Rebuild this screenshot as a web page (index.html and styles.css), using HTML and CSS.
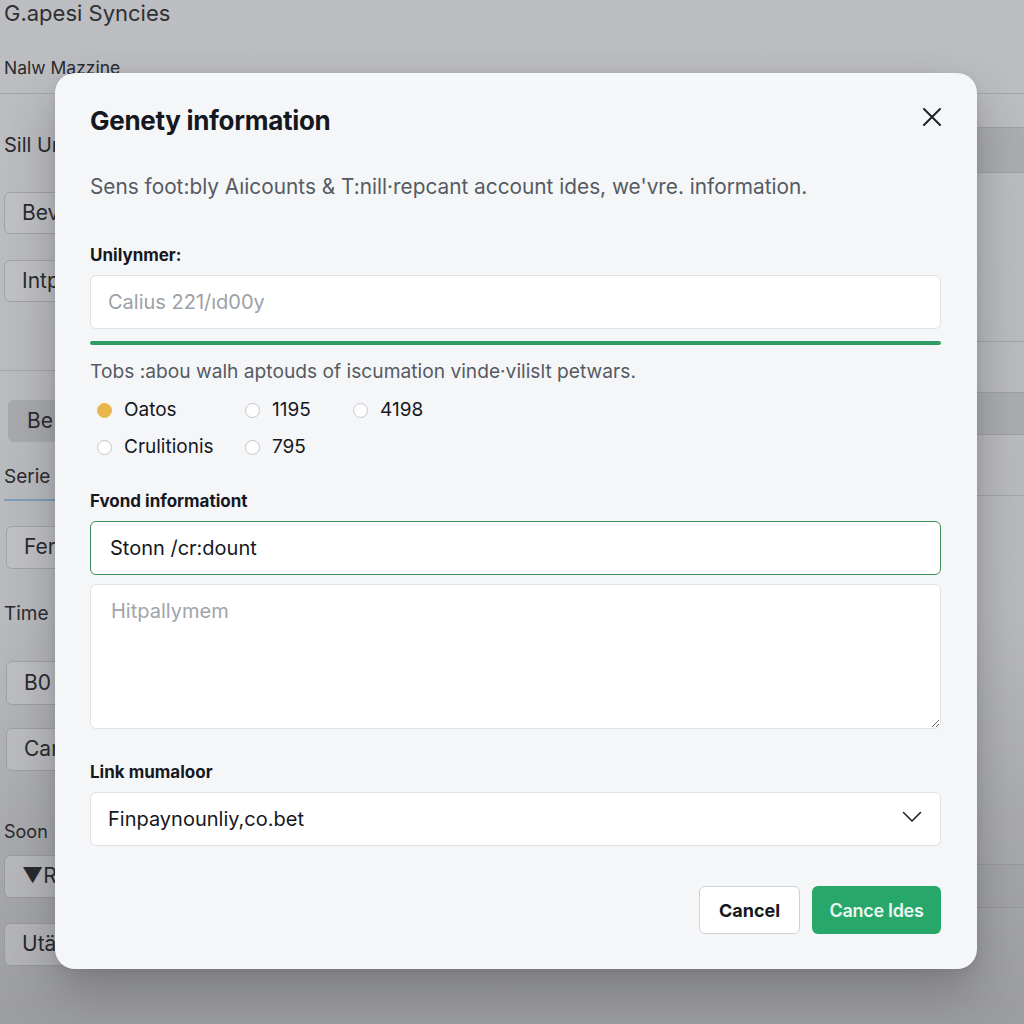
FILE: index.html
```html
<!DOCTYPE html>
<html lang="en">
<head>
<meta charset="utf-8">
<title>Genety information</title>
<link rel="stylesheet" href="styles.css">
</head>
<body>
<div class="page">
  <div class="page-left">
    <h1 class="bg-title">G.apesi Syncies</h1>
    <div class="bg-sub">Nalw Mazzine</div>
    <div class="bg-rule r1"></div>
    <div class="bg-text t1">Sill Ur</div>
    <div class="bg-btn b1">Bev</div>
    <div class="bg-btn b2">Intp</div>
    <div class="bg-rule r2"></div>
    <div class="bg-btn bg-btn-filled b3">Be</div>
    <div class="bg-text t2">Serie</div>
    <div class="bg-blue"></div>
    <div class="bg-btn b4">Fer</div>
    <div class="bg-text t3">Time</div>
    <div class="bg-btn b5">B0</div>
    <div class="bg-btn b6">Car</div>
    <div class="bg-text t4">Soon</div>
    <div class="bg-btn b7">▼R</div>
    <div class="bg-btn b8">Utä</div>
  </div>
  <div class="page-right">
    <div class="bg-rule rr1"></div>
    <div class="bg-band band1"></div>
    <div class="bg-rule rr2"></div>
    <div class="bg-band band2"></div>
    <div class="bg-rule rr3"></div>
    <div class="bg-band band3"></div>
  </div>
</div>
<div class="shade"></div>

<div class="modal" role="dialog">
  <div class="modal-head">
    <h2 class="modal-title">Genety information</h2>
    <button class="close" aria-label="Close">
      <svg width="20" height="20" viewBox="0 0 20 20"><path d="M2 2 L18 18 M18 2 L2 18" stroke="#1f2227" stroke-width="2" stroke-linecap="round" fill="none"/></svg>
    </button>
  </div>
  <p class="desc">Sens foot:bly Aıicounts &amp; T:nill·repcant account ides, we'vre. information.</p>

  <label class="label l1">Unilynmer:</label>
  <input class="field" type="text" placeholder="Calius 221/ıd00y">
  <div class="progress"></div>

  <p class="note">Tobs :abou walh aptouds of iscumation vinde·vilislt petwars.</p>
  <div class="radios">
    <div class="radio"><span class="dot dot-on"></span>Oatos</div>
    <div class="radio"><span class="dot"></span>1195</div>
    <div class="radio"><span class="dot"></span>4198</div>
    <div class="radio"><span class="dot"></span>Crulitionis</div>
    <div class="radio"><span class="dot"></span>795</div>
  </div>

  <label class="label l2">Fvond informationt</label>
  <input class="field field-focus" type="text" value="Stonn /cr:dount">
  <textarea class="area" placeholder="Hitpallymem"></textarea>

  <label class="label l3">Link mumaloor</label>
  <div class="select">
    <span>Finpaynounliy,co.bet</span>
    <svg width="20" height="12" viewBox="0 0 20 12"><path d="M1.5 1.5 L10 10 L18.5 1.5" stroke="#1f2227" stroke-width="1.6" fill="none" stroke-linecap="round" stroke-linejoin="round"/></svg>
  </div>

  <div class="actions">
    <button class="btn btn-cancel">Cancel</button>
    <button class="btn btn-primary">Cance Ides</button>
  </div>
</div>
</body>
</html>
```
FILE: styles.css
```css
* { box-sizing: border-box; }
html, body { margin: 0; padding: 0; }
body {
  width: 1024px;
  height: 1024px;
  overflow: hidden;
  background: linear-gradient(#bdbec2 0%, #b9babe 60%, #a9aaae 100%);
  font-family: Inter, "Liberation Sans", sans-serif;
  color: #2a2b2e;
  position: relative;
}
.page { display: flex; justify-content: space-between; }
.page-left { width: 260px; padding-left: 4px; display: flex; flex-direction: column; align-items: flex-start; }
.page-right { width: 260px; display: flex; flex-direction: column; }

.bg-title { margin: 0; font-size: 22px; line-height: 27px; font-weight: 400; color: #2f3034; }
.bg-sub { margin-top: 30px; font-size: 17.5px; line-height: 22px; color: #2a2b2e; }
.bg-rule { height: 1px; background: #a5a6aa; align-self: stretch; }
.r1 { margin: 14px 0 0 -4px; }
.bg-text { font-size: 20px; line-height: 24px; color: #2a2b2e; }
.t1 { margin-top: 39px; }
.bg-btn {
  height: 42px; width: 140px;
  border: 1px solid #a2a3a7; border-radius: 6px;
  background: #c0c1c5;
  font-size: 21px; line-height: 40px; padding-left: 17px; color: #2a2b2e;
}
.b1 { margin-top: 35px; }
.b2 { margin-top: 26px; }
.r2 { margin: 68px 0 0 -4px; }
.b3 { margin-top: 29px; margin-left: 4px; background: #a9aaae; border-color: #a9aaae; padding-left: 18px; }
.t2 { margin-top: 23px; font-size: 19px; }
.bg-blue { margin-top: 10px; height: 2px; width: 100px; background: #7d9fba; }
.b4 { margin-top: 25px; height: 43px; margin-left: 2px; }
.t3 { margin-top: 33px; font-size: 19px; }
.b5 { margin-top: 35px; height: 44px; margin-left: 2px; line-height: 42px; }
.b6 { margin-top: 23px; height: 43px; margin-left: 2px; }
.t4 { margin-top: 50px; font-size: 18px; line-height: 22px; }
.b7 { margin-top: 12px; height: 43px; margin-left: 0; }
.b8 { margin-top: 25px; height: 43px; margin-left: 0; }

.rr1 { margin-top: 93px; }
.bg-band { background: #acadb1; border-top: 1px solid #a0a1a5; border-bottom: 1px solid #a0a1a5; }
.band1 { margin-top: 33px; height: 46px; }
.rr2 { margin-top: 168px; }
.band2 { margin-top: 50px; height: 43px; }
.rr3 { margin-top: 60px; }
.band3 { margin-top: 368px; height: 44px; }

.shade { position: absolute; inset: 0; background: linear-gradient(rgba(0,0,0,0) 60%, rgba(0,0,0,0.08) 100%); }

.modal {
  position: absolute;
  left: 55px; top: 73px;
  width: 922px; height: 896px;
  background: #f5f6f8;
  border-radius: 20px;
  box-shadow: 0 24px 50px rgba(40,40,45,0.3), 0 2px 8px rgba(0,0,0,0.08);
  padding: 32px 36px 35px 35px;
  display: flex; flex-direction: column;
}
.modal-head { display: flex; justify-content: space-between; align-items: center; height: 32px; }
.modal-title { margin: 0; font-size: 26px; line-height: 32px; font-weight: 700; color: #15181e; letter-spacing: -0.3px; }
.close { background: none; border: 0; padding: 0; margin-right: -1px; margin-top: -8px; width: 20px; height: 20px; }
.close svg { display: block; }

.desc { margin: 36px 0 0; font-size: 20.8px; line-height: 28px; color: #565b63; white-space: nowrap; }

.label { display: block; font-size: 17px; line-height: 22px; font-weight: 700; color: #15181e; }
.l1 { margin-top: 43px; }
.l2 { margin-top: 30px; }
.l3 { margin-top: 32px; }

.field {
  margin-top: 9px;
  height: 54px; width: 100%;
  border: 1.5px solid #dfe1e4; border-radius: 6px;
  background: #fff;
  font-family: inherit; font-size: 20px; color: #15181e;
  padding: 0 17px;
  outline: none;
}
.field::placeholder { color: #9ca1a8; }
.field-focus { border-color: #3f8e5e; padding-left: 19px; }

.progress { margin-top: 12px; height: 4px; border-radius: 2px; background: #2f9d63; }

.note { margin: 13px 0 0; font-size: 19.2px; line-height: 26px; color: #565b63; white-space: nowrap; }

.radios {
  margin-top: 13px;
  display: grid;
  grid-template-columns: 148px 108px auto;
  row-gap: 11px;
  padding-left: 7px;
}
.radio { display: flex; align-items: center; gap: 12px; font-size: 19px; line-height: 26px; color: #15181e; }
.dot { width: 15px; height: 15px; border-radius: 50%; border: 1.5px solid #c3c6cb; background: #fff; flex: none; }
.dot-on { background: #e8b64a; border-color: #e8b64a; }

.area {
  margin-top: 9px;
  height: 145px; width: 100%;
  border: 1.5px solid #e1e3e6; border-radius: 6px;
  background: #fff;
  font-family: inherit; font-size: 20px;
  padding: 14px 20px;
  resize: vertical;
  outline: none;
}
.area::placeholder { color: #a0a5ab; }

.select {
  margin-top: 9px;
  height: 54px;
  border: 1.5px solid #dfe1e4; border-radius: 6px;
  background: #fff;
  display: flex; align-items: center; justify-content: space-between;
  padding: 0 18px 0 17px;
  font-size: 20px; color: #15181e;
}
.select svg { margin-top: -4px; }

.actions { margin-top: 40px; display: flex; justify-content: flex-end; gap: 12px; }
.btn {
  height: 48px; border-radius: 6px;
  font-family: inherit; font-size: 18px; font-weight: 700;
  padding: 0; white-space: nowrap;
}
.btn-cancel { width: 101px; background: #fff; border: 1.5px solid #cfd2d6; color: #15181e; }
.btn-primary { width: 129px; background: #27a86a; border: 0; color: #eaf7ef; font-weight: 600; letter-spacing: -0.3px; }
```
